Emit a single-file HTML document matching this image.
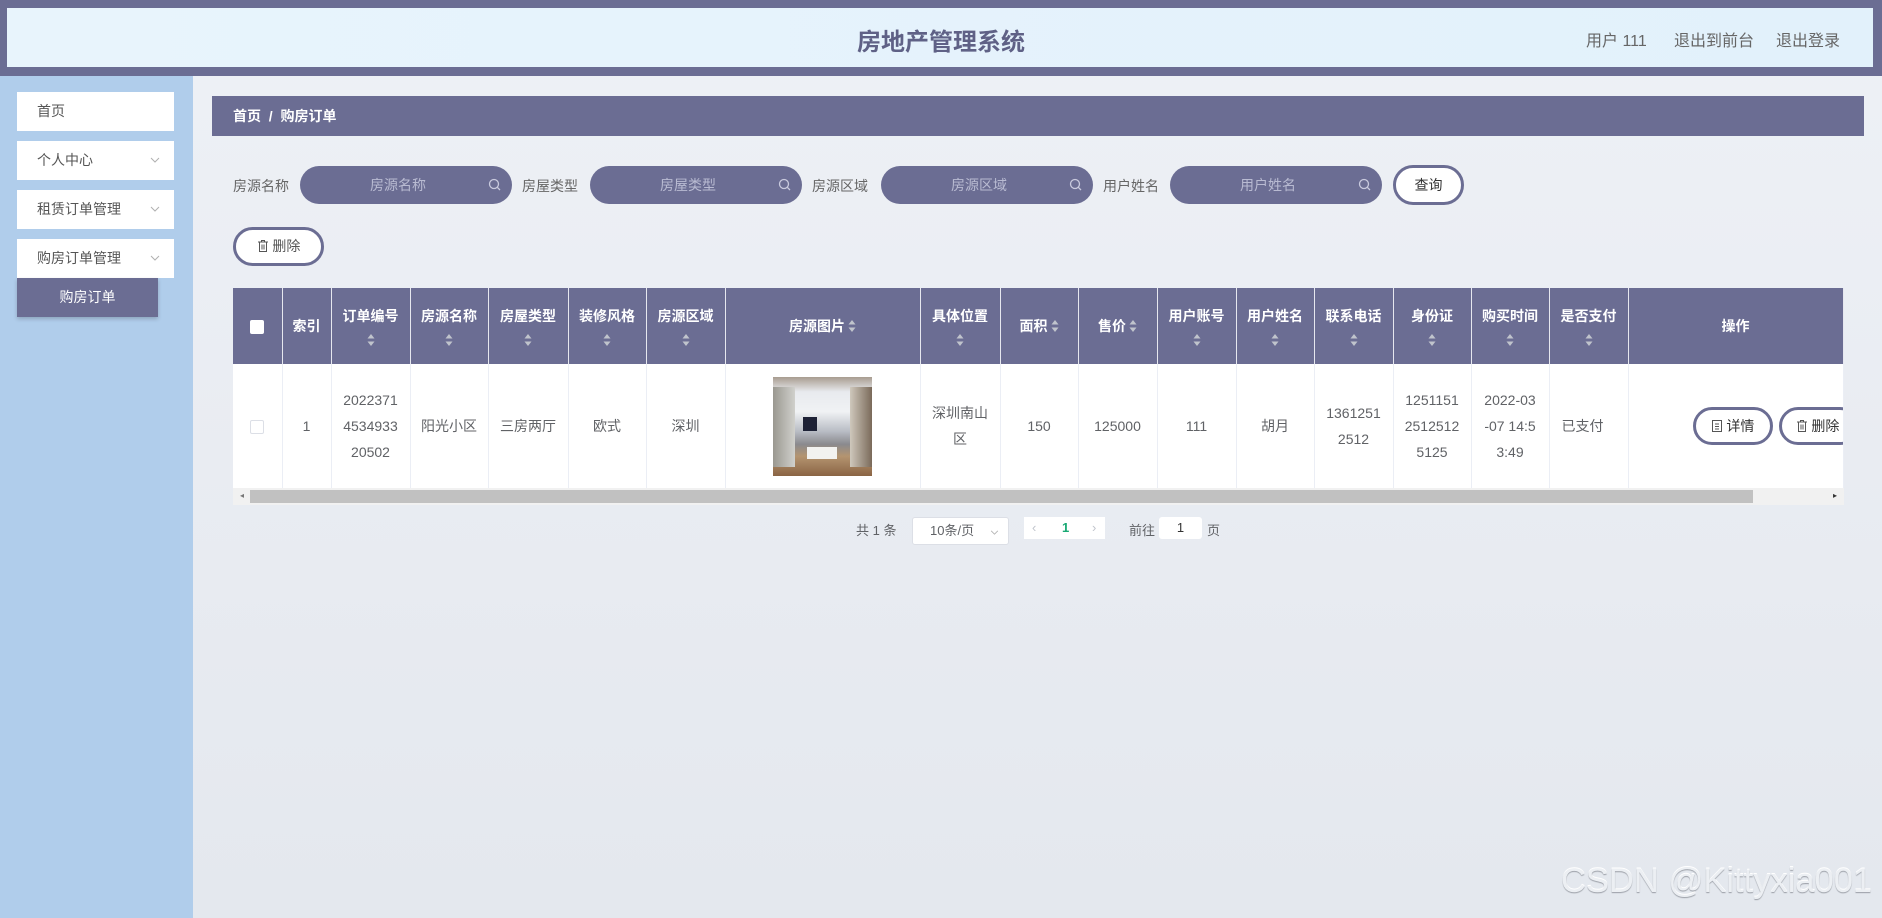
<!DOCTYPE html>
<html><head><meta charset="utf-8"><style>
*{margin:0;padding:0;box-sizing:border-box}
body{width:1882px;height:918px;overflow:hidden;position:relative;font-family:"Liberation Sans","Noto Sans CJK SC",sans-serif;background:linear-gradient(180deg,#eef1f6 0%,#e9ecf2 50%,#e4e8ee 100%);color:#606266}
.abs{position:absolute}
.hdr{left:0;top:0;width:1882px;height:76px;background:#6b6d93}
.hin{left:7px;top:8px;width:1866px;height:59px;background:linear-gradient(90deg,#e8f4fc,#e2f1fb)}
.title{left:0;width:1882px;top:22px;text-align:center;font-size:24px;font-weight:bold;color:#5f6186}
.hr{top:27px;font-size:16px;color:#666}
.side{left:0;top:76px;width:193px;height:842px;background:#b0cdeb}
.mi{left:17px;width:157px;height:39px;background:#fff;font-size:14px;color:#555;line-height:39px;padding-left:20px}
.mi svg{position:absolute;right:14px;top:16px}
.sub{left:17px;top:278px;width:141px;height:39px;background:#6b6d93;color:#fff;font-size:14px;line-height:39px;text-align:center;box-shadow:0 2px 4px rgba(0,0,0,.2)}
.bc{left:212px;top:96px;width:1652px;height:40px;background:#6b6d93;color:#fff;font-size:14px;font-weight:bold;line-height:40px;padding-left:21px}
.lbl{top:176px;font-size:14px;color:#666}
.pill{top:166px;width:212px;height:38px;border-radius:19px;background:#6b6d93;color:#b9bbd2;font-size:14px;line-height:38px;padding-left:70px}
.pill svg{position:absolute;right:10px;top:12px}
.btn{border:3px solid #6b6d93;border-radius:22px;background:#fff;color:#333;font-size:14px;text-align:center}
table{position:absolute;left:233px;top:288px;border-collapse:collapse;table-layout:fixed;width:1610px}
th{background:#6b6d93;color:#fff;font-size:14px;font-weight:bold;height:76px;border-right:1px solid #e6e7ef;vertical-align:middle;text-align:center;line-height:22px}
td{background:#fff;height:124px;font-size:14px;color:#606266;text-align:center;border-right:1px solid #ebeef5;line-height:26px}
.s{display:block;margin:6px auto 0;width:8px;height:14px}
.si{display:inline-block;width:8px;height:14px;vertical-align:-2px;margin-left:3px}
.ab{display:inline-block;width:80px;height:38px;border:3px solid #6b6d93;border-radius:19px;line-height:32px;font-size:14px;color:#333;margin-right:6px}
</style></head><body>
<svg width="0" height="0" style="position:absolute"><defs>
<symbol id="sort" viewBox="0 0 8 14"><path d="M4 1L7.5 5.5H0.5Z M4 13L7.5 8.5H0.5Z" fill="#c0c4cc"/></symbol>
<symbol id="trash" viewBox="0 0 12 14"><path d="M1 3H11M4.5 3V1.5H7.5V3M2.5 3V12.5H9.5V3M5 5.5V10.5M7 5.5V10.5" fill="none" stroke="#555" stroke-width="1"/></symbol>
<symbol id="doc" viewBox="0 0 12 14"><path d="M1.5 1.5H10.5V12.5H1.5Z M4 5H8M4 7.5H8M4 10H8" fill="none" stroke="#555" stroke-width="1"/></symbol>
<symbol id="chev" viewBox="0 0 10 6"><path d="M1 1L5 5L9 1" fill="none" stroke="#b0b0b0" stroke-width="1"/></symbol>
</defs></svg>
<div class="abs hdr"></div>
<div class="abs hin"></div>
<div class="abs title">房地产管理系统</div>
<div class="abs hr" style="left:1586px">用户 111</div>
<div class="abs hr" style="left:1674px">退出到前台</div>
<div class="abs hr" style="left:1776px">退出登录</div>
<div class="abs side"></div>
<div class="abs mi" style="top:92px">首页</div>
<div class="abs mi" style="top:141px">个人中心<svg width="10" height="6"><use href="#chev"/></svg></div>
<div class="abs mi" style="top:190px">租赁订单管理<svg width="10" height="6"><use href="#chev"/></svg></div>
<div class="abs mi" style="top:239px">购房订单管理<svg width="10" height="6"><use href="#chev"/></svg></div>
<div class="abs sub">购房订单</div>
<div class="abs bc">首页 &nbsp;/&nbsp; 购房订单</div>

<div class="abs lbl" style="left:233px">房源名称</div>
<div class="abs pill" style="left:300px">房源名称<svg width="14" height="14" viewBox="0 0 14 14"><circle cx="6" cy="6" r="4.5" fill="none" stroke="#c9cade" stroke-width="1.3"/><path d="M9.3 9.3L12 12" stroke="#c9cade" stroke-width="1.3"/></svg></div>
<div class="abs lbl" style="left:522px">房屋类型</div>
<div class="abs pill" style="left:590px">房屋类型<svg width="14" height="14" viewBox="0 0 14 14"><circle cx="6" cy="6" r="4.5" fill="none" stroke="#c9cade" stroke-width="1.3"/><path d="M9.3 9.3L12 12" stroke="#c9cade" stroke-width="1.3"/></svg></div>
<div class="abs lbl" style="left:812px">房源区域</div>
<div class="abs pill" style="left:881px">房源区域<svg width="14" height="14" viewBox="0 0 14 14"><circle cx="6" cy="6" r="4.5" fill="none" stroke="#c9cade" stroke-width="1.3"/><path d="M9.3 9.3L12 12" stroke="#c9cade" stroke-width="1.3"/></svg></div>
<div class="abs lbl" style="left:1103px">用户姓名</div>
<div class="abs pill" style="left:1170px">用户姓名<svg width="14" height="14" viewBox="0 0 14 14"><circle cx="6" cy="6" r="4.5" fill="none" stroke="#c9cade" stroke-width="1.3"/><path d="M9.3 9.3L12 12" stroke="#c9cade" stroke-width="1.3"/></svg></div>
<div class="abs btn" style="left:1393px;top:165px;width:71px;height:40px;line-height:34px">查询</div>
<div class="abs btn" style="left:233px;top:227px;width:91px;height:39px;line-height:33px;color:#555"><svg width="12" height="14" style="vertical-align:-2px"><use href="#trash"/></svg> 删除</div>

<table>
<colgroup><col style="width:49px"><col style="width:49px"><col style="width:79px"><col style="width:78px"><col style="width:80px"><col style="width:78px"><col style="width:79px"><col style="width:195px"><col style="width:80px"><col style="width:78px"><col style="width:79px"><col style="width:79px"><col style="width:78px"><col style="width:79px"><col style="width:78px"><col style="width:78px"><col style="width:79px"><col style="width:215px"></colgroup>
<tr>
<th><span style="display:inline-block;width:14px;height:14px;background:#fff;border-radius:2px;vertical-align:middle"></span></th>
<th>索引</th>
<th>订单编号<svg class="s"><use href="#sort"/></svg></th>
<th>房源名称<svg class="s"><use href="#sort"/></svg></th>
<th>房屋类型<svg class="s"><use href="#sort"/></svg></th>
<th>装修风格<svg class="s"><use href="#sort"/></svg></th>
<th>房源区域<svg class="s"><use href="#sort"/></svg></th>
<th>房源图片<svg class="si"><use href="#sort"/></svg></th>
<th>具体位置<svg class="s"><use href="#sort"/></svg></th>
<th>面积<svg class="si"><use href="#sort"/></svg></th>
<th>售价<svg class="si"><use href="#sort"/></svg></th>
<th>用户账号<svg class="s"><use href="#sort"/></svg></th>
<th>用户姓名<svg class="s"><use href="#sort"/></svg></th>
<th>联系电话<svg class="s"><use href="#sort"/></svg></th>
<th>身份证<svg class="s"><use href="#sort"/></svg></th>
<th>购买时间<svg class="s"><use href="#sort"/></svg></th>
<th>是否支付<svg class="s"><use href="#sort"/></svg></th>
<th>操作</th>
</tr>
<tr>
<td><span style="display:inline-block;width:14px;height:14px;border:1px solid #dcdfe6;border-radius:2px;vertical-align:middle"></span></td>
<td>1</td>
<td>2022371<br>4534933<br>20502</td>
<td>阳光小区</td>
<td>三房两厅</td>
<td>欧式</td>
<td>深圳</td>
<td><div style="width:99px;height:99px;margin:0 auto;background:linear-gradient(180deg,#a89c90 0%,#e8eaee 15%,#f0f2f4 35%,#b8bcc4 55%,#8a8a8e 68%,#b49470 80%,#8a6444 100%);position:relative;overflow:hidden"><div style="position:absolute;left:0;top:10px;width:22px;height:80px;background:linear-gradient(90deg,#9a9890,#d0d0cc)"></div><div style="position:absolute;right:0;top:10px;width:22px;height:80px;background:linear-gradient(90deg,#cfc8bc,#7a6a5a)"></div><div style="position:absolute;left:30px;top:40px;width:14px;height:14px;background:#1e2236"></div><div style="position:absolute;left:34px;top:70px;width:30px;height:12px;background:#f2f2f0"></div></div></td>
<td>深圳南山<br>区</td>
<td>150</td>
<td>125000</td>
<td>111</td>
<td>胡月</td>
<td>1361251<br>2512</td>
<td>1251151<br>2512512<br>5125</td>
<td>2022-03<br>-07 14:5<br>3:49</td>
<td style="text-align:left;padding-left:12px">已支付</td>
<td style="text-align:left;padding-left:64px;white-space:nowrap;overflow:hidden"><span class="ab" style="text-align:center"><svg width="12" height="14" style="vertical-align:-2px"><use href="#doc"/></svg> 详情</span><span class="ab" style="padding-left:14px"><svg width="12" height="14" style="vertical-align:-2px"><use href="#trash"/></svg> 删除</span></td>
</tr>
</table>
<div class="abs" style="left:233px;top:488px;width:1611px;height:17px;background:#f1f1f1"></div>
<div class="abs" style="left:250px;top:490px;width:1503px;height:13px;background:#c1c1c1"></div>
<div class="abs" style="left:240px;top:491px;font-size:8px;color:#777">◂</div>
<div class="abs" style="left:1833px;top:491px;font-size:8px;color:#333">▸</div>

<div class="abs" style="left:856px;top:520px;font-size:13px;color:#606266">共 1 条</div>
<div class="abs" style="left:912px;top:517px;width:97px;height:28px;background:#fff;border:1px solid #dcdfe6;border-radius:3px;font-size:13px;line-height:26px;padding-left:17px">10条/页<svg width="9" height="5" style="position:absolute;right:9px;top:12px"><use href="#chev"/></svg></div>
<div class="abs" style="left:1024px;top:517px;width:81px;height:22px;background:#fff;font-size:13px;line-height:22px"><span style="position:absolute;left:8px;color:#c0c4cc">‹</span><span style="position:absolute;left:38px;color:#19a974;font-weight:bold">1</span><span style="position:absolute;left:68px;color:#c0c4cc">›</span></div>
<div class="abs" style="left:1129px;top:520px;font-size:13px">前往</div>
<div class="abs" style="left:1159px;top:517px;width:43px;height:22px;background:#fff;border-radius:3px;font-size:13px;line-height:22px;text-align:center;color:#333">1</div>
<div class="abs" style="left:1207px;top:520px;font-size:13px">页</div>

<div class="abs" style="left:1561px;top:862px;font-size:34.5px;color:#eceff3;text-shadow:0 1px 1px #9a9ea6,0 -1px 0 #fff;font-family:'Liberation Sans',sans-serif">CSDN @Kittyxia001</div>
</body></html>
